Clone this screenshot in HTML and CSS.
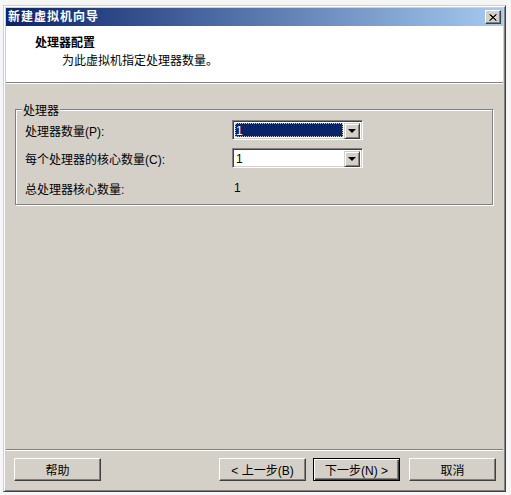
FILE: index.html
```html
<!DOCTYPE html>
<html lang="zh-CN">
<head>
    <meta charset="UTF-8">
    <title>新建虚拟机向导</title>
    <link rel="stylesheet" href="styles.css">
</head>
<body>
    <div class="window">
        <div class="titlebar">
            <span class="caption">新建虚拟机向导</span>
            <div class="close-btn">
                <svg width="8" height="7" viewBox="0 0 8 7">
                    <path d="M0.5 0.5 L7 6.5 M1.5 0.5 L7.5 6.5 M7 0.5 L0.5 6.5 M7.5 0.5 L1 6.5" stroke="#000" stroke-width="1"/>
                </svg>
            </div>
        </div>
        <div class="header">
            <div class="header-title">处理器配置</div>
            <div class="header-desc">为此虚拟机指定处理器数量。</div>
        </div>
        <div class="sep"></div>
        <div class="content">
            <div class="group">
                <span class="group-title">处理器</span>
                <div class="row">
                    <span class="label">处理器数量(P):</span>
                    <div class="combo focused">
                        <span class="combo-text">1</span>
                        <span class="combo-btn"><i class="arrow"></i></span>
                    </div>
                </div>
                <div class="row">
                    <span class="label">每个处理器的核心数量(C):</span>
                    <div class="combo">
                        <span class="combo-text">1</span>
                        <span class="combo-btn"><i class="arrow"></i></span>
                    </div>
                </div>
                <div class="row total">
                    <span class="label">总处理器核心数量:</span>
                    <span class="value">1</span>
                </div>
            </div>
        </div>
        <div class="sep"></div>
        <div class="footer">
            <button class="btn">帮助</button>
            <button class="btn back">&lt; 上一步(B)</button>
            <button class="btn default">下一步(N) &gt;</button>
            <button class="btn cancel">取消</button>
        </div>
    </div>
</body>
</html>
```

FILE: styles.css
```css
body {
    margin: 0;
    background-color: #f6f6f6;
    font-family: "Liberation Sans", "Noto Sans CJK SC", sans-serif;
    font-size: 12px;
    color: #000;
}
.window {
    box-sizing: border-box;
    width: 503px;
    height: 487px;
    margin: 5px 0 0 3px;
    padding: 2px;
    background: #d4d0c8;
    border: 1px solid;
    border-color: #d4d0c8 #404040 #404040 #d4d0c8;
    box-shadow: inset 1px 1px #fff, inset -1px -1px #808080;
    display: flex;
    flex-direction: column;
}
.titlebar {
    height: 18px;
    flex-shrink: 0;
    display: flex;
    align-items: center;
    justify-content: space-between;
    padding: 0 2px;
    background: linear-gradient(to right, #0a246a, #a6caf0);
}
.caption {
    color: #fff;
    font-weight: bold;
    letter-spacing: 1px;
    line-height: 18px;
}
.close-btn {
    width: 16px;
    height: 14px;
    box-sizing: border-box;
    background: #d4d0c8;
    border: 1px solid;
    border-color: #fff #404040 #404040 #fff;
    box-shadow: inset -1px -1px #808080;
    display: flex;
    align-items: center;
    justify-content: center;
}
.close-btn svg {
    display: block;
}
.header {
    height: 56px;
    flex-shrink: 0;
    box-sizing: border-box;
    background: #fff;
    padding: 10px 0 0 29px;
}
.header-title {
    font-weight: bold;
    line-height: 14px;
}
.header-desc {
    margin: 4px 0 0 27px;
    line-height: 14px;
}
.sep {
    flex-shrink: 0;
    border-top: 1px solid #808080;
    border-bottom: 1px solid #fff;
}
.content {
    flex: 1;
}
.group {
    position: relative;
    margin: 25px 10px 0 9px;
    border: 1px solid #808080;
    box-shadow: inset 1px 1px #fff, 1px 1px #fff;
    padding: 10px 0 6px 9px;
}
.group-title {
    position: absolute;
    top: -6px;
    left: 6px;
    padding: 0 1px;
    line-height: 14px;
    background: #d4d0c8;
}
.row {
    display: flex;
    align-items: center;
    height: 20px;
}
.row + .row {
    margin-top: 8px;
}
.row.total {
    margin-top: 10px;
}
.label {
    width: 207px;
}
.value {
    padding-left: 2px;
}
.combo {
    width: 131px;
    height: 20px;
    box-sizing: border-box;
    display: flex;
    background: #fff;
    border: 1px solid;
    border-color: #808080 #fff #fff #808080;
    box-shadow: inset 1px 1px #404040, inset -1px -1px #d4d0c8;
    padding: 2px;
}
.combo-text {
    flex: 1;
    padding-left: 1px;
    line-height: 16px;
}
.combo.focused .combo-text {
    margin-right: 1px;
    background: #0a246a;
    color: #fff;
    outline: 1px dotted #c8c8c8;
    outline-offset: -1px;
}
.combo-btn {
    width: 16px;
    height: 16px;
    box-sizing: border-box;
    background: #d4d0c8;
    border: 1px solid;
    border-color: #d4d0c8 #404040 #404040 #d4d0c8;
    box-shadow: inset 1px 1px #fff, inset -1px -1px #808080;
    display: flex;
    align-items: center;
    justify-content: center;
}
.arrow {
    width: 0;
    height: 0;
    border-left: 4px solid transparent;
    border-right: 4px solid transparent;
    border-top: 4px solid #000;
}
.footer {
    flex-shrink: 0;
    display: flex;
    padding: 7px 0 8px 8px;
}
.btn {
    width: 87px;
    height: 23px;
    box-sizing: border-box;
    padding: 0;
    font-family: inherit;
    font-size: 12px;
    color: #000;
    background: #d4d0c8;
    border: 1px solid;
    border-color: #fff #404040 #404040 #fff;
    box-shadow: inset -1px -1px #808080;
}
.btn.back {
    margin-left: 118px;
}
.btn.default {
    margin-left: 7px;
    border-color: #000;
    box-shadow: inset 1px 1px #fff, inset -1px -1px #404040, inset -2px -2px #808080;
}
.btn.cancel {
    margin-left: 9px;
}
```
